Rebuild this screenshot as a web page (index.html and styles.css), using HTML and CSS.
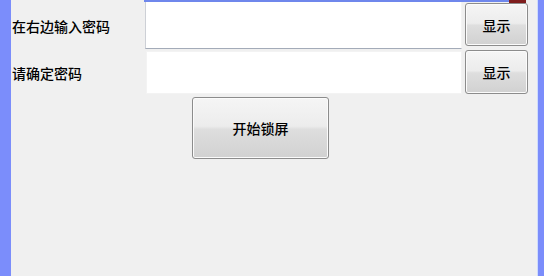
FILE: index.html
```html
<!DOCTYPE html>
<html lang="zh-CN">
<head>
<meta charset="utf-8">
<title>锁屏</title>
<link rel="stylesheet" href="styles.css">
</head>
<body>
<div class="window">
  <div class="edge-left"></div>
  <div class="main">
    <div class="topline"><span class="seg-blue"></span><span class="seg-red"></span></div>
    <div class="row row1">
      <label class="label">在右边输入密码</label>
      <input class="field field1" type="password">
      <button class="btn btn-show btn-show1">显示</button>
    </div>
    <div class="row row2">
      <label class="label">请确定密码</label>
      <input class="field field2" type="password">
      <button class="btn btn-show btn-show2">显示</button>
    </div>
    <div class="action">
      <button class="btn btn-lock">开始锁屏</button>
    </div>
  </div>
  <div class="edge-right"></div>
</div>
</body>
</html>
```
FILE: styles.css
```css
html, body {
  margin: 0;
  padding: 0;
  width: 544px;
  height: 276px;
  overflow: hidden;
}
body {
  font-family: "Noto Sans CJK SC", "Microsoft YaHei", sans-serif;
  color: #000;
}
.window {
  display: flex;
  width: 544px;
  height: 276px;
  background: #f0f0f0;
}
.edge-left {
  width: 11px;
  flex: none;
  background: #7b8dfb;
}
.edge-right {
  width: 6px;
  flex: none;
  background: #7b8dfb;
  border-left: 1px solid #cfdcfc;
}
.main {
  flex: 1;
  display: flex;
  flex-direction: column;
}
.topline {
  display: flex;
  height: 2px;
  padding-left: 133px;
  align-items: flex-start;
}
.seg-blue {
  width: 365px;
  height: 2px;
  background: #6f87ec;
}
.seg-red {
  width: 17px;
  height: 3px;
  background: #7e1d1d;
}
.row {
  display: flex;
  align-items: center;
}
.row1 {
  height: 47px;
}
.row2 {
  height: 43px;
  margin-top: 2px;
}
.label {
  width: 133px;
  flex: none;
  padding-left: 1px;
  font-size: 14px;
  font-weight: 500;
  line-height: 20px;
}
.field {
  box-sizing: border-box;
  margin: 0;
  padding: 0 4px;
  background: #fff;
  outline: none;
  font-size: 14px;
}
.field1 {
  width: 317px;
  height: 47px;
  border: none;
  border-left: 1px solid #cdd0d6;
  border-bottom: 1px solid #a3abb8;
  border-right: 1px solid #f4f4f4;
}
.field2 {
  width: 316px;
  height: 43px;
  margin-left: 1px;
  border: 1px solid #f3f3f3;
}
.btn {
  box-sizing: border-box;
  margin: 0;
  padding: 0;
  border: 1px solid #8c8c8c;
  border-radius: 3px;
  background: linear-gradient(#f5f5f5 0%, #ececec 47%, #dedede 52%, #d1d1d1 100%);
  box-shadow: inset 0 0 0 1px #fbfbfb;
  font-family: "Noto Sans CJK SC", "Microsoft YaHei", sans-serif;
  font-size: 14px;
  font-weight: 500;
  color: #000;
}
.btn-show {
  width: 63px;
  margin-left: 3px;
  align-self: flex-start;
}
.btn-show1 {
  height: 43px;
  margin-top: 1px;
}
.btn-show2 {
  height: 44px;
  margin-top: -1px;
}
.action {
  display: flex;
  padding-left: 181px;
  margin-top: 3px;
}
.btn-lock {
  width: 137px;
  height: 62px;
}
```
